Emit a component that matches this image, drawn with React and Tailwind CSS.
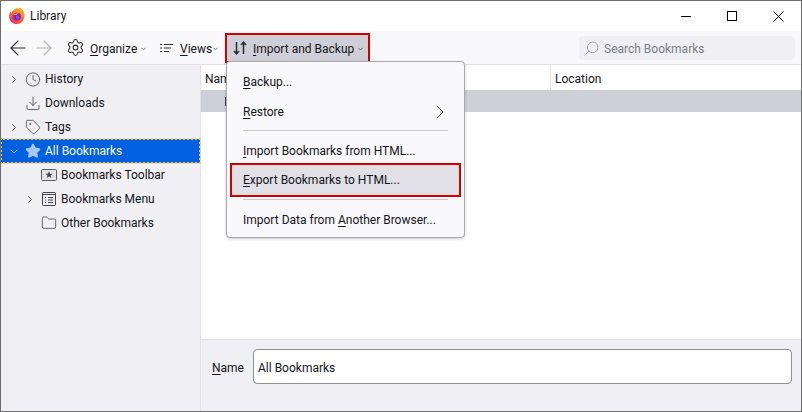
import React from "react";
import { ArrowLeft, ArrowRight, Settings, ChevronRight, ChevronDown, Clock, Download, Tag, Star, Folder, Search } from "lucide-react";

const U = ({ children }) => <span className="underline underline-offset-2">{children}</span>;

const Caret = () => (
  <svg width="5" height="4" viewBox="0 0 5 4" className="ml-[4px] mt-[2px]" fill="none" stroke="#70707a" strokeWidth="1"><path d="M0.5 0.8 L2.5 3 L4.5 0.8" /></svg>
);

const FoxLogo = () => (
  <svg width="18" height="18" viewBox="0 0 18 18">
    <defs>
      <linearGradient id="fx" x1="0.8" y1="0" x2="0.2" y2="1">
        <stop offset="0" stopColor="#ffbd2e" />
        <stop offset="0.5" stopColor="#ff6a2b" />
        <stop offset="1" stopColor="#f0246e" />
      </linearGradient>
    </defs>
    <path d="M9 1 C10.5 1.8 12 1.2 12.5 .6 C13 2 14.8 2.6 15.6 4.6 C17 7 17 11 15 13.8 C13 16.6 10.2 17 9 17 C4.6 17 1.2 13.6 1.2 9.4 C1.2 7.4 1.6 6 2.6 4.6 C2.8 5.2 3.2 5.6 3.6 5.8 C4.4 3.6 6.6 2 9 1 Z" fill="url(#fx)" />
    <circle cx="9" cy="9.6" r="3.9" fill="#6a2fc2" />
    <path d="M5.4 8 C6.4 6.4 8.6 5.6 11 6.6 C9.6 6.8 8.8 7.4 8.6 8 C7.6 8.2 6.4 8.2 5.4 8 Z" fill="#ff9a3d" />
    <circle cx="9.4" cy="10" r="1.7" fill="#b33fd0" />
  </svg>
);

const ToolbarIcon = () => (
  <svg width="16" height="16" viewBox="0 0 16 16" fill="none">
    <rect x="0.5" y="2.5" width="15" height="11" rx="1" stroke="#5b5b66" fill="#e3e3e8" />
    <path d="M8 4.2 L9 6.7 L11.6 6.8 L9.5 8.4 L10.3 11 L8 9.5 L5.7 11 L6.5 8.4 L4.4 6.8 L7 6.7 Z" fill="#42414d" />
  </svg>
);

const MenuIcon = () => (
  <svg width="16" height="16" viewBox="0 0 16 16" fill="none" stroke="#42414d">
    <rect x="1.5" y="1.5" width="13" height="13" rx="1" />
    <path d="M1.5 3.5 H14.5" />
    <path d="M4 6.5 H5 M4 9 H5 M4 11.5 H5 M7 6.5 H12 M7 9 H12 M7 11.5 H12" />
  </svg>
);

const ViewsIcon = () => (
  <svg width="13" height="10" viewBox="0 0 13 10" fill="none" stroke="#2b2a33" strokeWidth="1">
    <path d="M0 1.5 H2 M0 5 H2 M0 8.5 H2 M4 1.5 H13 M4 5 H11 M4 8.5 H9" />
  </svg>
);

const ImportIcon = () => (
  <svg width="14" height="14" viewBox="0 0 14 14" className="ml-[6px]" fill="none" stroke="#2b2a33" strokeWidth="1.5">
    <path d="M3.5 1 V12.5 M1 10 L3.5 12.8 L6 10" />
    <path d="M10.5 13 V1.5 M8 4 L10.5 1.2 L13 4" />
  </svg>
);

const Row = ({ indent = "pl-[7px]", chevron, icon, selected, children }) => (
  <div className={`h-[24px] flex items-center ${indent} ${selected ? "bg-[#0060df] text-white outline-2 -outline-offset-1 outline-dotted outline-[#f4c95d]" : ""}`}>
    <div className="w-[12px] flex justify-center">
      {chevron === "right" && <ChevronRight size={15} strokeWidth={1.5} color="#42414d" />}
      {chevron === "down" && <ChevronDown size={15} strokeWidth={1.5} color="#b8d4f8" />}
    </div>
    <div className="w-[16px] h-[16px] ml-[5px] flex items-center justify-center">{icon}</div>
    <span className="ml-[4px] whitespace-nowrap">{children}</span>
  </div>
);

const Sep = ({ className }) => <div className={`h-px bg-[#c9c9d0] mx-[16px] ${className}`} />;

export default function App() {
  return (
    <div className="relative w-[802px] h-[412px] flex flex-col bg-white border border-[#6e6e6e] text-[12px] text-[#15141a] overflow-hidden" style={{ fontFamily: 'Roboto, "Noto Sans", sans-serif' }}>
      {/* title */}
      <div className="h-[30px] shrink-0 flex items-center bg-white">
        <div className="ml-[7px]"><FoxLogo /></div>
        <span className="ml-[4px] text-[#1a1a1a]">Library</span>
        <div className="ml-auto flex items-center">
          <div className="w-[46px] flex justify-center"><div className="w-[10px] h-px bg-black" /></div>
          <div className="w-[46px] flex justify-center"><div className="w-[10px] h-[10px] border border-black" /></div>
          <div className="w-[46px] flex justify-center">
            <svg width="11" height="11" viewBox="0 0 11 11" stroke="#000" strokeWidth="1"><path d="M0.5 0.5 L10.5 10.5 M10.5 0.5 L0.5 10.5" /></svg>
          </div>
        </div>
      </div>
      {/* toolbar */}
      <div className="h-[34px] shrink-0 flex items-center bg-[#f9f9fb] border-b border-[#e0e0e6]">
        <ArrowLeft size={24} strokeWidth={1.1} className="ml-[5px]" color="#2b2a33" />
        <ArrowRight size={24} strokeWidth={1.1} className="ml-[2px]" color="#b4b4ba" />
        <Settings size={19} strokeWidth={1.3} className="ml-[10px]" color="#2b2a33" />
        <span className="ml-[5px] w-[47px] pt-[2px]"><U>O</U>rganize</span><Caret />
        <div className="ml-[14px]"><ViewsIcon /></div>
        <span className="ml-[7px] w-[29px] pt-[2px]"><U>V</U>iews</span><Caret />
        <div className="ml-[7px] h-[30px] w-[145px] flex items-center border-[2px] border-[#d40000] bg-[#cfcfd8]">
          <ImportIcon />
          <span className="ml-[6px] whitespace-nowrap pt-[2px]"><U>I</U>mport and Backup</span><Caret />
        </div>
        <div className="ml-auto mr-[6px] w-[216px] h-[24px] rounded-[4px] bg-[#f0f0f4] flex items-center text-[#7c7c86]">
          <Search size={16} strokeWidth={1.2} className="ml-[5px] -scale-x-100" color="#8f8f9d" />
          <span className="ml-[4px] pt-[2px]">Search Bookmarks</span>
        </div>
      </div>
      {/* body */}
      <div className="flex-1 flex min-h-0">
        <div className="w-[200px] shrink-0 bg-[#f0f0f4] pt-[2px] border-r border-[#e0e0e6]">
          <Row chevron="right" icon={<Clock size={19} strokeWidth={1.2} color="#42414d" />}>History</Row>
          <Row icon={<Download size={19} strokeWidth={1.2} color="#42414d" />} >Downloads</Row>
          <Row chevron="right" icon={<Tag size={18} strokeWidth={1.2} color="#42414d" />}>Tags</Row>
          <Row chevron="down" selected icon={<Star size={18} fill="#a7c8f5" color="#a7c8f5" />}>All Bookmarks</Row>
          <Row indent="pl-[23px]" icon={<ToolbarIcon />}>Bookmarks Toolbar</Row>
          <Row indent="pl-[23px]" chevron="right" icon={<MenuIcon />}>Bookmarks Menu</Row>
          <Row indent="pl-[23px]" icon={<Folder size={18} strokeWidth={1.2} color="#42414d" />}>Other Bookmarks</Row>
        </div>
        <div className="flex-1 flex flex-col min-w-0">
          <div className="h-[25px] shrink-0 flex items-center bg-white">
            <div className="w-[350px] h-full pl-[4px] pt-[2px] flex items-center border-r border-[#e0e0e6]">Name</div>
            <div className="pl-[4px] pt-[2px]">Location</div>
          </div>
          <div className="h-[22px] shrink-0 bg-[#cfcfd8] flex items-center pl-[24px]">
            <div className="w-px h-[9px] bg-[#42414d]" />
          </div>
          <div className="flex-1 bg-white" />
          <div className="h-[72px] shrink-0 bg-[#f0f0f4] border-t border-[#e0e0e6] flex items-start pt-[9px] pl-[11px] pr-[9px]">
            <span className="mt-[10px] w-[32px]"><U>N</U>ame</span>
            <div className="ml-[9px] flex-1 h-[35px] bg-white border border-[#8f8f9d] rounded-[4px] flex items-center pl-[4px] pt-[2px]">All Bookmarks</div>
          </div>
        </div>
      </div>
      {/* menu */}
      <div className="absolute left-[225px] top-[60px] w-[239px] h-[177px] bg-[#f9f9fb] border border-[#a8a8ae] rounded-[4px] shadow-[0_1px_3px_rgba(0,0,0,0.2)] pt-[5px]">
        <div className="h-[30px] flex items-center pl-[16px]"><span><U>B</U>ackup...</span></div>
        <div className="h-[30px] flex items-center justify-between pl-[16px] pr-[12px]">
          <span><U>R</U>estore</span>
          <ChevronRight size={24} strokeWidth={1} color="#55555e" />
        </div>
        <Sep className="mt-[3px] mb-[6px]" />
        <div className="h-[26px] flex items-center pl-[16px] pt-[1px]"><span><U>I</U>mport Bookmarks from HTML...</span></div>
        <div className="h-[34px] mx-[3px] border-[2px] border-[#d40000] bg-[#e0e0e6] pl-[11px] flex items-center"><span><U>E</U>xport Bookmarks to HTML...</span></div>
        <Sep className="mt-[2px] mb-[4px]" />
        <div className="h-[30px] flex items-center pl-[16px] pt-[1px]"><span>Import Data from <U>A</U>nother Browser...</span></div>
      </div>
    </div>
  );
}
